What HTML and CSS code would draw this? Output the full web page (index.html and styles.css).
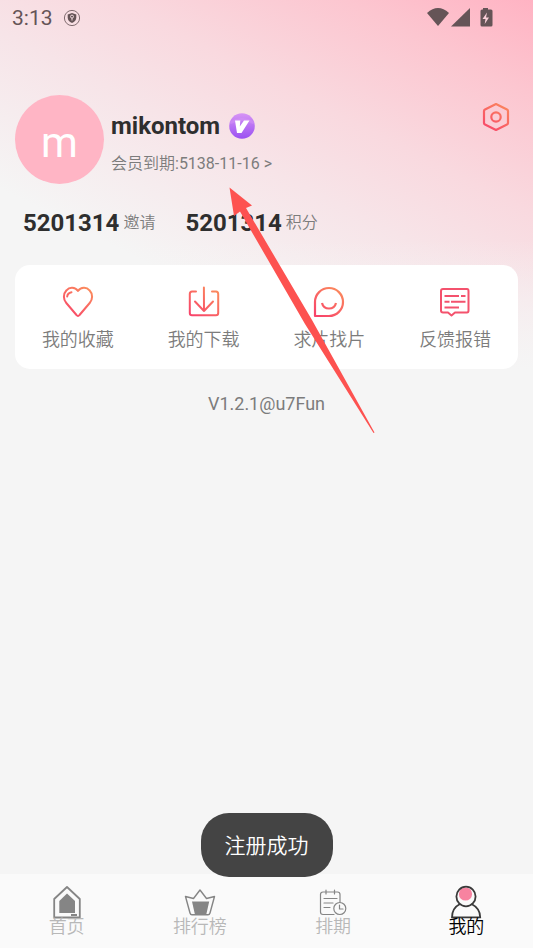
FILE: index.html
```html
<!DOCTYPE html>
<html lang="zh-CN">
<head>
<meta charset="utf-8">
<meta name="viewport" content="width=device-width, initial-scale=1">
<title>我的</title>
<link rel="stylesheet" href="styles.css">
</head>
<body>
<svg class="defs" aria-hidden="true">
  <defs>
    <linearGradient id="warm" gradientUnits="userSpaceOnUse" x1="26" y1="2" x2="6" y2="30">
      <stop offset="0" stop-color="#fb8a5c"/><stop offset="1" stop-color="#f8456a"/>
    </linearGradient>
    <linearGradient id="violet" x1="0" y1="0" x2="0" y2="1">
      <stop offset="0" stop-color="#d794f5"/><stop offset="1" stop-color="#9a50f2"/>
    </linearGradient>
  </defs>
</svg>
<div class="page">
  <div class="status">
    <span class="clock">3:13</span>
    <svg class="shield" viewBox="0 0 18 18">
      <circle cx="9" cy="9" r="7.6" fill="none" stroke="#806c70" stroke-width="1"/>
      <path d="M9 4 13.3 5.500V8.500Q13.300 12 9 14 4.700 12 4.700 8.500V5.500Z" fill="#655457"/>
      <circle cx="9" cy="7.600" r="1.500" fill="none" stroke="#efd8dc" stroke-width="1"/>
      <path d="M9 9v2.500" stroke="#efd8dc"/>
    </svg>
    <svg class="signals" viewBox="0 0 66 20">
      <path d="M0 5Q11 -5 22 5L11 18Z"/>
      <path d="M43 0V18.500H24Z"/>
      <path d="M56 0h5v1.500h3q1.500 0 1.500 1.500v14q0 1.500-1.500 1.500h-9q-1.500 0-1.500-1.500v-14q0-1.500 1.500-1.500H56Z"/>
      <path class="bolt" d="M60 4.500 55.500 11h3l-.8 5 4.300-6.500h-3Z"/>
    </svg>
  </div>

  <main class="content">
    <header class="profile">
      <div class="avatar">m</div>
      <div class="identity">
        <div class="name-row">
          <h1 class="name">mikontom</h1>
          <svg class="badge" viewBox="0 0 26 26">
            <circle cx="13" cy="13" r="12.800" fill="url(#violet)"/>
            <path d="M1 10Q13 3 25 10" fill="none" stroke="#e2a9f7" stroke-width="3" opacity=".25"/>
            <path d="M6 7.500H11.300L10.800 13.500 15 7.500H20.500L12.500 20H8Z" fill="#fff"/>
          </svg>
        </div>
        <a class="expiry" href="#vip">会员到期:5138-11-16 &gt;</a>
      </div>
      <button class="settings" type="button" aria-label="设置">
        <svg viewBox="0 0 28 30" fill="none" stroke="url(#warm)" stroke-width="2.200" stroke-linejoin="round">
          <path d="M14 2 25 7.500Q26 8 26 9V21Q26 22 25 22.500L14 28 3 22.500Q2 22 2 21V9Q2 8 3 7.500Z"/>
          <circle cx="14" cy="15" r="4.700"/>
        </svg>
      </button>
    </header>

    <div class="stats">
      <div class="stat"><strong>5201314</strong><span>邀请</span></div>
      <div class="stat"><strong>5201314</strong><span>积分</span></div>
    </div>

    <nav class="card" aria-label="功能">
      <a class="action" href="#fav">
        <svg viewBox="0 0 32 32" fill="none" stroke="url(#warm)" stroke-width="2" stroke-linecap="round" stroke-linejoin="round">
          <path d="M16 5C13 1 7.500.8 4.500 4.300 1 8 1.200 13.500 4.300 17L14.500 29Q16 31 17.500 29L27.700 17C30.800 13.500 31 8 27.500 4.300 24.500.8 19 1 16 5Z"/>
          <path d="M5.200 10.500Q5.500 7 9.500 6.200"/>
        </svg>
        <span>我的收藏</span>
      </a>
      <a class="action" href="#down">
        <svg viewBox="0 0 32 32" fill="none" stroke="url(#warm)" stroke-width="2" stroke-linecap="round" stroke-linejoin="round">
          <path d="M8 5.500H4Q1.800 5.500 1.800 8V27Q1.800 29.300 4 29.300H28Q30.200 29.300 30.200 27V8Q30.200 5.500 28 5.500H24"/>
          <path d="M15.900 1.500 16 25M7 15.500 16 25 25 15.500"/>
        </svg>
        <span>我的下载</span>
      </a>
      <a class="action" href="#ask">
        <svg viewBox="0 0 32 32" fill="none" stroke="url(#warm)" stroke-width="2.200" stroke-linejoin="round">
          <path d="M2 30V16A14 14 0 1 1 16 30Z"/>
          <path d="M9 17A7.200 7.200 0 0 0 23 17"/>
        </svg>
        <span>求片找片</span>
      </a>
      <a class="action" href="#report">
        <svg viewBox="0 0 32 32" fill="none" stroke="#f4526d" stroke-width="2" stroke-linejoin="round">
          <path d="M4 3H28Q29.500 3 29.500 5V24.500Q29.500 26.500 28 26.500H16L12.500 29.500 9 26.500H4Q2 26.500 2 24.500V5Q2 3 4 3Z"/>
          <path d="M5.500 10H20M22 10H26.500M5.500 15.800H10.500M12 15.800H26.500M5.500 21.500H20"/>
        </svg>
        <span>反馈报错</span>
      </a>
    </nav>

    <p class="version">V1.2.1@u7Fun</p>
  </main>

  <nav class="tabs" aria-label="主导航">
    <a class="tab" href="#home">
      <svg viewBox="0 0 32 34" fill="none">
        <path d="M16 2 28.800 14V32.500H3.200V14Z" stroke="#858585" stroke-width="1.800" stroke-linejoin="round"/>
        <path d="M16 8.500 24 16V28H8.300V16Z" fill="#858585"/>
        <path d="M20 30H26" stroke="#858585" stroke-width="2"/>
      </svg>
      <span>首页</span>
    </a>
    <a class="tab" href="#rank">
      <svg viewBox="0 0 32 34" fill="none">
        <path d="M1.500 11.500 9.500 13.500 16 5 22.500 13.500 30.500 11.500 26 28Q25.500 29.800 24 29.800H8Q6.500 29.800 6 28Z" stroke="#858585" stroke-width="1.400" stroke-linejoin="round"/>
        <path d="M8 16.500H25.200L22.500 28.500Q22 30 21 30H12.500Q11 30 10.700 28.500Z" fill="#858585"/>
      </svg>
      <span>排行榜</span>
    </a>
    <a class="tab" href="#schedule">
      <svg viewBox="0 0 32 34" fill="none" stroke="#858585" stroke-width="1.200" stroke-linecap="round">
        <path d="M17 29.500H6Q3.500 29.500 3.500 27V9.500Q3.500 7 6 7H20.500Q23 7 23 9.500V17M9 5V9M17.500 5V9M7 13.500H20M7 18H16M7 22.500H13"/>
        <circle cx="22.800" cy="23.500" r="6"/>
        <path d="M22.500 20V24H26"/>
      </svg>
      <span>排期</span>
    </a>
    <a class="tab active" href="#me" aria-current="page">
      <svg viewBox="0 0 32 34" fill="none" stroke="#3a3a3a" stroke-width="1.800">
        <circle cx="15.500" cy="9" r="6.600" fill="#f783a0" stroke="none"/>
        <path d="M10 19C4 22 2 26 2 32.400H30.200C30.200 26 27.500 22 21.500 19"/>
        <ellipse cx="16" cy="11.500" rx="9.600" ry="9.800"/>
      </svg>
      <span>我的</span>
    </a>
  </nav>

  <svg class="pointer" viewBox="0 0 146 247" aria-hidden="true">
    <path d="M.5.500 23 18.500 17 21 83 133 145.500 245.500 144.500 246 76 137 11 24.500 5 29Z" fill="#fd5250"/>
  </svg>
  <div class="toast" role="status">注册成功</div>
</div>
</body>
</html>
```
FILE: styles.css
```css
* { box-sizing: border-box; }

body {
  margin: 0;
  background: #f5f5f5;
  color: #7c7c7c;
  font-family: Roboto, "Noto Sans CJK SC DemiLight", "Noto Sans CJK SC Light", "Noto Sans CJK SC", sans-serif;
  font-size: 18px;
  line-height: 24px;
}

a { color: inherit; text-decoration: none; }

.defs { position: absolute; width: 0; height: 0; }

.page {
  position: relative;
  display: flex;
  flex-direction: column;
  min-height: 100vh;
  background:
    linear-gradient(to bottom, rgba(245, 245, 245, 0) 240px, #f5f5f5 370px) 0 0 / 100% 370px no-repeat,
    linear-gradient(207deg, #ffb3c3 0, #fcc6d0 85px, #f9d9df 190px, #f7e4e8 270px, #f5f5f5 410px) 0 0 / 100% 370px no-repeat;
}

.status {
  display: flex;
  align-items: center;
  height: 36px;
  padding: 0 40px 0 12px;
  color: #655457;
}
.clock { font-size: 21px; }
.shield { width: 18px; height: 18px; margin-left: 10px; }
.signals { width: 66px; height: 20px; margin-left: auto; fill: #655457; }
.bolt { fill: #fbd0d9; }

.content { flex: 1; padding: 59px 15px 0; }

.profile { display: flex; align-items: flex-start; }
.avatar {
  width: 89px;
  height: 89px;
  border-radius: 50%;
  background: #ffb5c5;
  color: #fff;
  font-size: 42px;
  line-height: 95px;
  text-align: center;
}
.identity { flex: 1; padding: 16px 0 0 7px; }
.name-row { display: flex; align-items: center; gap: 9px; height: 30px; }
.name { margin: 0; color: #2e2e2e; font-size: 24px; font-weight: 700; }
.badge { width: 26px; height: 26px; }
.expiry { display: block; margin-top: 11px; font-size: 16px; }
.settings { margin: 7px 8px 0 0; padding: 0; border: 0; background: none; }
.settings svg { display: block; width: 28px; height: 30px; }

.stats { display: flex; gap: 30px; padding: 24px 8px 0; }
.stat { display: flex; align-items: center; gap: 4px; height: 30px; font-size: 16px; }
.stat strong { color: #2e2e2e; font-size: 24px; font-weight: 700; }

.card {
  display: grid;
  grid-template-columns: repeat(4, 1fr);
  margin-top: 27px;
  padding: 21px 0 17px;
  border-radius: 15px;
  background: #fff;
}
.action { display: flex; flex-direction: column; align-items: center; gap: 10px; }
.action svg { width: 32px; height: 32px; }

.version { margin: 23px 0 0; text-align: center; }

.tabs {
  display: grid;
  grid-template-columns: repeat(4, 1fr);
  height: 74px;
  padding-top: 11px;
  background: #fafafa;
}
.tab { display: flex; flex-direction: column; align-items: center; color: #b8b8b8; }
.tab svg { width: 32px; height: 34px; }
.tab span { margin-top: -4px; }
.active { color: #000; }

.pointer { position: absolute; top: 187px; left: 229px; width: 146px; height: 247px; pointer-events: none; }

.toast {
  position: fixed;
  right: 0;
  bottom: 71px;
  left: 0;
  width: fit-content;
  margin: 0 auto;
  padding: 21px 24px 19px;
  border-radius: 28px;
  background: #444;
  color: #fff;
  font-size: 21px;
}
```
